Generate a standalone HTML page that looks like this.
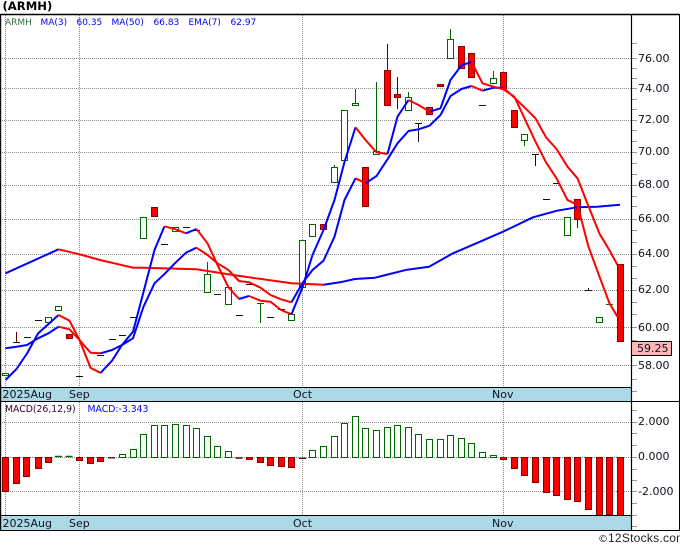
<!DOCTYPE html>
<html><head><meta charset="utf-8"><style>
html,body{margin:0;padding:0;background:#fff}
svg{display:block}
text{font-family:"DejaVu Sans",sans-serif;font-size:11px;fill:#112}
.g{fill:#fff;stroke:#060;stroke-width:1}
.r{fill:#f00;stroke:#800;stroke-width:1}
.k{fill:none;stroke:#111;stroke-width:1}
.m{fill:none;stroke:#600;stroke-width:1}
.w{fill:none;stroke:#060;stroke-width:1}
.b{fill:none;stroke:#00f;stroke-width:2;stroke-linejoin:round}
.e{fill:none;stroke:#f00;stroke-width:2;stroke-linejoin:round}
.d{stroke:#8c8c8c;stroke-width:1;stroke-dasharray:1 1;fill:none}
.t{stroke:#999;stroke-width:1;fill:none}
</style></head><body>
<svg width="680" height="546" viewBox="0 0 680 546" xmlns="http://www.w3.org/2000/svg">
<text x="2.5" y="10" style="font-weight:bold;font-size:11.6px;fill:#000">(ARMH)</text>

<!-- grid -->
<path class="d" d="M5.5 15V387M79.5 15V387M302.5 15V387M503.5 15V387M5.5 402V515M79.5 402V515M302.5 402V515M503.5 402V515"/>
<path class="d" d="M0 58.5H631M0 88.5H631M0 120.5H631M0 152.5H631M0 185.5H631M0 219.5H631M0 254.5H631M0 290.5H631M0 327.5H631M0 365.5H631M0 422.5H631M0 457.5H631M0 491.5H631"/>

<!-- bands -->
<rect x="0" y="387" width="631" height="14" fill="#add8e6"/>
<rect x="0" y="516" width="631" height="14" fill="#add8e6"/>

<!-- ticks -->
<path class="t" d="M632 43.5h5M632 58.5h5M632 68.5h5M632 78.5h5M632 88.5h5M632 99.5h5M632 109.5h5M632 120.5h5M632 130.5h5M632 141.5h5M632 152.5h5M632 163.5h5M632 174.5h5M632 185.5h5M632 196.5h5M632 206.5h5M632 219.5h5M632 230.5h5M632 242.5h5M632 254.5h5M632 266.5h5M632 278.5h5M632 290.5h5M632 302.5h5M632 314.5h5M632 327.5h5M632 340.5h5M632 365.5h5M632 379.5h5M632 391.5h5M632 410.5h5M632 422.5h5M632 433.5h5M632 445.5h5M632 457.5h5M632 469.5h5M632 480.5h5M632 491.5h5M632 503.5h5M632 515.5h5M632 526.5h5"/>

<!-- candles -->
<path class="k" d="M24 337.5h7M35 320.5h7M76 376.5h7M97 355.5h7M109 339.5h7M119 335.5h7M130 317.5h7M161 244.5h7M183 227.5h7M193 230.5h7M214 294.5h7M236 315.5h7M246 284.5h7M267 317.5h7M278 309.5h7M543 199.5h7M553 183.5h7"/>
<path class="k" d="M415 123.5h7M418.5 123.5V142M532 154.5h7M535.5 154.5V166M585 290.5h7M588.5 290.5V288"/>
<path class="m" d="M13 342.5h7M16.5 342V332M479 105.5h7"/>
<path class="w" d="M257 303.5h7M260.5 303.5V323M606 304.5h7"/>
<path class="w" d="M207.5 262V274M334.5 165V168M355.5 89V103M376.5 82V152M408.5 92V98M450.5 29V59M493.5 71V78M524.5 140V146"/>
<path class="m" d="M387.5 44V71M397.5 77V109M577.5 219V228"/>
<path class="g" d="M2.5 373.5h6v2h-6zM45.5 317.5h6v5h-6zM55.5 306.5h6v4h-6zM140.5 217.5h6v21h-6zM172.5 227.5h6v4h-6zM204.5 274.5h6v18h-6zM225.5 287.5h6v17h-6zM288.5 314.5h6v6h-6zM299.5 240.5h6v47h-6zM309.5 224.5h6v12h-6zM331.5 167.5h6v15h-6zM341.5 110.5h6v50h-6zM352.5 103.5h6v2h-6zM373.5 151.5h6v3h-6zM405.5 97.5h6v13h-6zM447.5 39.5h6v19h-6zM490.5 78.5h6v5h-6zM521.5 134.5h6v6h-6zM564.5 217.5h6v18h-6zM596.5 317.5h6v5h-6z"/>
<path class="r" d="M66.5 334.5h6v4h-6zM151.5 207.5h6v9h-6zM320.5 224.5h6v5h-6zM362.5 167.5h6v39h-6zM384.5 70.5h6v35h-6zM394.5 94.5h6v3h-6zM426.5 107.5h6v7h-6zM437.5 84.5h6v2h-6zM458.5 46.5h6v22h-6zM468.5 53.5h6v24h-6zM500.5 72.5h6v16h-6zM511.5 110.5h6v17h-6zM574.5 199.5h6v20h-6zM617.5 264.5h6v77h-6z"/>

<!-- MA50 -->
<polyline class="b" points="5.5,273.3 58.5,249.3"/>
<polyline class="e" points="58.5,249.3 79.5,254.3 100,260 133,267.7 143.5,267.7 196.5,269.3 233,275 291.5,283.3 323.5,284.7"/>
<polyline class="b" points="323.5,284.7 340,282.3 355,279 375,277.7 407,269.7 429,266.7 453,253.3 480,241.7 503,231.7 533,217.3 557,210.7 577,207.3 597,206.7 620,204.7"/>

<!-- EMA7 -->
<polyline class="b" points="5.5,348.3 16.5,346.7 27,345 38,338.3 48.5,333.3 58.5,326.7"/>
<polyline class="e" points="58.5,326.7 69.5,329.3 79.5,340 90.5,352.7 100.5,353.3"/>
<polyline class="b" points="100.5,353.3 112,350 122,345 133,338.3 143.5,306.7 154.5,283.3 164.5,274 175.5,262.7 186,252.7 196.5,247.7"/>
<polyline class="e" points="196.5,247.7 207.5,255 217.5,263.3 228.5,270 239,281 249,282.3 260.5,287.7 270.5,295 281,299.3 291.5,302.3"/>
<polyline class="b" points="291.5,302.3 302.5,283 312.5,270 323.5,260.7 334.5,236.7 344.5,200 355.5,178.3"/>
<polyline class="e" points="355.5,178.3 365.5,183.3"/>
<polyline class="b" points="365.5,183.3 376.5,176 387.5,159.3 397.5,143.3 408.5,131 418.5,129.3 429.5,125.7 440.5,115 450.5,96 461.5,89 471.5,86"/>
<polyline class="e" points="471.5,86 482.5,90.7"/>
<polyline class="b" points="482.5,90.7 493.5,87.7 503.5,87.7"/>
<polyline class="e" points="503.5,87.7 514.5,97.7 524.5,107.3 535.5,118.3 546,137.3 556.5,149 567.5,166.7 577.5,178.3 586,200 599.3,233.3 609.3,250 617.5,265"/>

<!-- MA3 -->
<polyline class="b" points="5.5,380 16.5,369 27,353.5 38,333.5 48.5,324 58.5,315"/>
<polyline class="e" points="58.5,315 69.5,320.7 79.5,340 90.5,367.7 100.5,373"/>
<polyline class="b" points="100.5,373 112,360.7 122,345 133,331.7 143.5,292 154.5,250 164.5,226.3"/>
<polyline class="e" points="164.5,226.3 175.5,229.3 186,233.3"/>
<polyline class="b" points="186,233.3 196.5,229"/>
<polyline class="e" points="196.5,229 207.5,243.3 217.5,265 228.5,287.3 239,299"/>
<polyline class="b" points="239,299 249,296"/>
<polyline class="e" points="249,296 260.5,300.7 270.5,301.7 281,310 291.5,314.3"/>
<polyline class="b" points="291.5,314.3 302.5,287.3 312.5,255 323.5,230 334.5,200 344.5,162 355.5,127.3"/>
<polyline class="e" points="355.5,127.3 365.5,140 376.5,152.3 387.5,154"/>
<polyline class="b" points="387.5,154 397.5,116.7 408.5,100"/>
<polyline class="e" points="408.5,100 418.5,105 429.5,111.7"/>
<polyline class="b" points="429.5,111.7 440.5,108.3 450.5,80 461.5,65.3 471.5,62"/>
<polyline class="e" points="471.5,62 482.5,83.3 493.5,86.7 503.5,89.3 514.5,97 524.5,118.3 535.5,141.7 546,162.3 556.5,178.3 567.5,200 577.5,205 588.5,246.7 599.5,276.7 609.5,303.3 617.5,316.7"/>

<!-- MACD bars -->
<path class="g" d="M119.5 454.5h6v3h-6zM130.5 449.5h6v8h-6zM140.5 434.5h6v23h-6zM151.5 425.5h6v32h-6zM161.5 425.5h6v32h-6zM172.5 424.5h6v33h-6zM183.5 425.5h6v32h-6zM193.5 428.5h6v29h-6zM204.5 436.5h6v21h-6zM214.5 446.5h6v11h-6zM225.5 451.5h6v6h-6zM309.5 450.5h6v7h-6zM320.5 446.5h6v11h-6zM331.5 436.5h6v21h-6zM341.5 423.5h6v34h-6zM352.5 416.5h6v41h-6zM362.5 428.5h6v29h-6zM373.5 430.5h6v27h-6zM384.5 427.5h6v30h-6zM394.5 425.5h6v32h-6zM405.5 427.5h6v30h-6zM415.5 434.5h6v23h-6zM426.5 439.5h6v18h-6zM437.5 439.5h6v18h-6zM447.5 435.5h6v22h-6zM458.5 438.5h6v19h-6zM468.5 443.5h6v14h-6zM479.5 452.5h6v5h-6zM490.5 455.5h6v2h-6z"/>
<path class="r" d="M2.5 457.5h6v34h-6zM13.5 457.5h6v26h-6zM23.5 457.5h6v19h-6zM35.5 457.5h6v11h-6zM45.5 457.5h6v5h-6zM76.5 457.5h6v3h-6zM87.5 457.5h6v6h-6zM97.5 457.5h6v4h-6zM257.5 457.5h6v5h-6zM267.5 457.5h6v8h-6zM278.5 457.5h6v9h-6zM288.5 457.5h6v10h-6zM246.5 457.5h6v2h-6zM500.5 457.5h6v2h-6zM511.5 457.5h6v11h-6zM521.5 457.5h6v18h-6zM532.5 457.5h6v25h-6zM543.5 457.5h6v35h-6zM553.5 457.5h6v38h-6zM564.5 457.5h6v42h-6zM574.5 457.5h6v44h-6zM585.5 457.5h6v52h-6zM596.5 457.5h6v58h-6zM606.5 457.5h6v57h-6zM617.5 457.5h6v58h-6z"/>
<path d="M55 456.5h7M65.5 456.5h7" stroke="#060" stroke-width="1.6" fill="none"/>
<path d="M108 457.8h7M235.5 458h7M299 458.3h7" stroke="#600" stroke-width="1.4" fill="none"/>

<!-- frames -->
<g stroke="#000" fill="none">
<path d="M0 14.5H680" stroke-width="1.6"/>
<path d="M679.5 14V530" stroke-width="1"/>
<path d="M631.5 14V530" stroke-width="1.2"/>
<path d="M0.5 14V530" stroke-width="1.4"/>
<path d="M0 387.5H631" stroke-width="1"/>
<path d="M0 401.5H680" stroke-width="1"/>
<path d="M0 515.5H631" stroke-width="1"/>
<path d="M0 530.5H680" stroke-width="1"/>
</g>

<!-- legend -->
<g style="font-size:9px">
<text x="5" y="25" style="font-size:9px;fill:#3d6b3d">ARMH</text>
<text x="40.5" y="25" style="font-size:9px;fill:#00f">MA(3)</text>
<text x="76.5" y="25" style="font-size:9px;fill:#00f">60.35</text>
<text x="111.5" y="25" style="font-size:9px;fill:#00f">MA(50)</text>
<text x="153.5" y="25" style="font-size:9px;fill:#00f">66.83</text>
<text x="188.5" y="25" style="font-size:9px;fill:#00f">EMA(7)</text>
<text x="230.5" y="25" style="font-size:9px;fill:#00f">62.97</text>
<text x="5" y="412" style="font-size:9.3px;fill:#303">MACD(26,12,9)</text>
<text x="87.5" y="412" style="font-size:9.3px;fill:#00f">MACD:-3.343</text>
</g>

<!-- axis labels -->
<text x="638" y="62">76.00</text>
<text x="638" y="92">74.00</text>
<text x="638" y="123">72.00</text>
<text x="638" y="155">70.00</text>
<text x="638" y="188">68.00</text>
<text x="638" y="222">66.00</text>
<text x="638" y="257">64.00</text>
<text x="638" y="293">62.00</text>
<text x="638" y="331">60.00</text>
<text x="638" y="369">58.00</text>
<rect x="631.5" y="341.5" width="40" height="14" fill="#ffb6b6" stroke="#000"/>
<text x="637" y="352">59.25</text>
<text x="638" y="425">2.000</text>
<text x="638" y="460">0.000</text>
<text x="638" y="495">-2.000</text>

<!-- date labels -->
<text x="2.5" y="398">2025Aug</text>
<text x="69" y="398">Sep</text>
<text x="293" y="398">Oct</text>
<text x="492" y="398">Nov</text>
<text x="2.5" y="527">2025Aug</text>
<text x="69" y="527">Sep</text>
<text x="293" y="527">Oct</text>
<text x="492" y="527">Nov</text>

<text x="598" y="542" style="font-size:10px;fill:#222">©</text>
<text x="608" y="542" style="font-family:'Liberation Sans',sans-serif;font-size:12px;fill:#222;letter-spacing:.25px">12Stocks.com</text>
</svg>
</body></html>
